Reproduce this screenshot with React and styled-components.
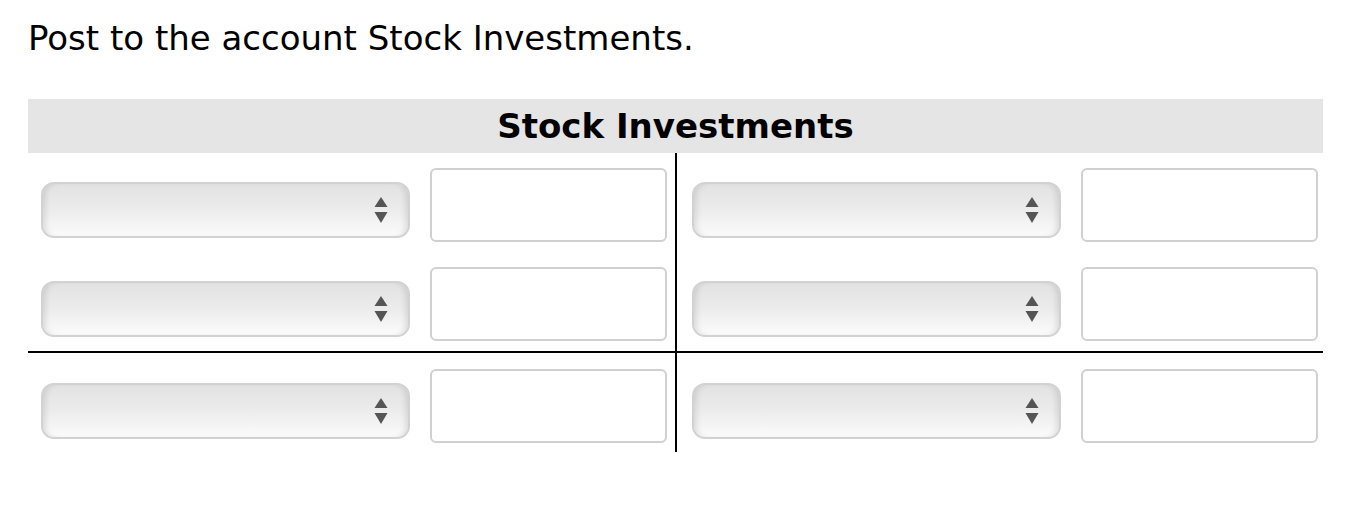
import React from 'react';
import styled, { createGlobalStyle } from 'styled-components';

const GlobalStyle = createGlobalStyle`
  body {
    margin: 0;
    background: #fff;
    font-family: "DejaVu Sans", Verdana, sans-serif;
    color: #000;
  }
`;

const Page = styled.div`
  padding: 17px 43px 0 28px;
`;

const Prompt = styled.p`
  margin: 0 0 40px;
  font-size: 34px;
  line-height: 42px;
`;

const Account = styled.div`
  width: 1295px;
`;

const AccountTitle = styled.div`
  height: 54px;
  background: #e5e5e5;
  display: flex;
  align-items: center;
  justify-content: center;
  font-size: 34px;
  font-weight: bold;
`;

const AccountBody = styled.div`
  display: grid;
  grid-template-columns: 647px 648px;
  grid-template-rows: 198px 101px;
`;

const Side = styled.div`
  display: flex;
  flex-direction: column;
  gap: 25px;
  padding: ${p => (p.$total ? '16px' : '15px')} 0 0 ${p => (p.$right ? '15px' : '13px')};
  border-left: ${p => (p.$right ? '2px solid #000' : 'none')};
  border-top: ${p => (p.$total ? '2px solid #000' : 'none')};
`;

const Entry = styled.div`
  display: flex;
  align-items: flex-start;
  gap: 20px;
`;

const Dropdown = styled.div`
  box-sizing: border-box;
  margin-top: 14px;
  width: 369px;
  height: 56px;
  border: 2px solid #d2d2d2;
  border-radius: 13px;
  background: linear-gradient(to bottom, #e2e2e2 0%, #ececec 50%, #fbfbfb 100%);
  box-shadow: inset 6px 0 6px -4px rgba(0, 0, 0, 0.12), inset -6px 0 6px -4px rgba(0, 0, 0, 0.12);
  display: flex;
  align-items: center;
  justify-content: flex-end;
  padding-right: 20px;
`;

const Amount = styled.div`
  box-sizing: border-box;
  width: 237px;
  height: 74px;
  border: 2px solid #d0d0d0;
  border-radius: 6px;
  background: #fff;
`;

const Arrows = () => (
  <svg width="14" height="28" viewBox="0 0 14 28">
    <path d="M7 1 L13.5 11 L0.5 11 Z" fill="#555" />
    <path d="M0.5 16 L13.5 16 L7 27 Z" fill="#555" />
  </svg>
);

const Row = () => (
  <Entry>
    <Dropdown>
      <Arrows />
    </Dropdown>
    <Amount />
  </Entry>
);

export default function App() {
  return (
    <Page>
      <GlobalStyle />
      <Prompt>Post to the account Stock Investments.</Prompt>
      <Account>
        <AccountTitle>Stock Investments</AccountTitle>
        <AccountBody>
          <Side>
            <Row />
            <Row />
          </Side>
          <Side $right>
            <Row />
            <Row />
          </Side>
          <Side $total>
            <Row />
          </Side>
          <Side $total $right>
            <Row />
          </Side>
        </AccountBody>
      </Account>
    </Page>
  );
}
